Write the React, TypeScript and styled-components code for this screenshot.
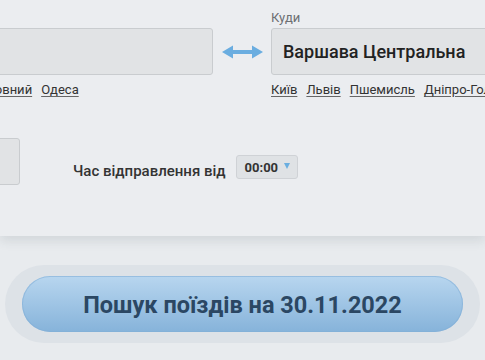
import React from "react";
import styled, { createGlobalStyle } from "styled-components";

const GlobalStyle = createGlobalStyle`
  html, body {
    margin: 0;
    padding: 0;
    background: #e8ebee;
    overflow: hidden;
  }
  body {
    font-family: Roboto, "Liberation Sans", Arial, sans-serif;
    color: #333;
  }
`;

const Page = styled.div`
  width: 485px;
  height: 360px;
  overflow: hidden;
`;

const Panel = styled.div`
  background: #ebedf0;
  height: 236px;
  box-shadow: 0 5px 10px rgba(60, 70, 80, 0.12);
  position: relative;
  padding-top: 10px;
  box-sizing: border-box;
`;

// the form is wider than the window: its left part is scrolled out of view
const Inner = styled.div`
  margin-left: -151px;
  width: 900px;
  display: flex;
  flex-direction: column;
  gap: 41px;
`;

const StationRow = styled.div`
  display: grid;
  grid-template-columns: 364px 58px 343px;
  align-items: start;
`;

const Field = styled.div`
  display: flex;
  flex-direction: column;
`;

const Label = styled.div`
  height: 18px;
  font-size: 13px;
  color: #6c6f73;
  line-height: 15px;
`;

const StationInput = styled.div`
  height: 47px;
  box-sizing: border-box;
  background: #e1e3e5;
  border: 1px solid #c9cccf;
  border-radius: 3px;
  padding: 0 11px;
  display: flex;
  align-items: center;
  font-size: 18px;
  font-weight: 500;
  color: #222;
`;

const Links = styled.div`
  display: flex;
  gap: 9px;
  margin-top: 7px;
  white-space: nowrap;
`;

const Link = styled.a`
  font-size: 13px;
  color: #333;
  text-decoration: underline;
  text-underline-offset: 2px;
  text-decoration-color: #666;
`;

const SwapBox = styled.div`
  height: 47px;
  margin-top: 18px;
  display: flex;
  align-items: center;
  justify-content: center;
`;

const TimeRow = styled.div`
  display: flex;
  align-items: flex-start;
`;

const DateInput = styled.div`
  width: 171px;
  height: 47px;
  box-sizing: border-box;
  background: #e1e3e5;
  border: 1px solid #c9cccf;
  border-radius: 3px;
`;

const TimeLabel = styled.span`
  margin-left: 53px;
  margin-top: 24px;
  line-height: 18px;
  font-size: 15px;
  font-weight: 500;
  color: #333;
`;

const Select = styled.div`
  margin-left: 10px;
  margin-top: 17px;
  width: 62px;
  height: 24px;
  box-sizing: border-box;
  background: #dfe2e5;
  border: 1px solid #cfd2d6;
  border-radius: 3px;
  display: flex;
  align-items: center;
  padding-left: 8px;
  gap: 6px;
  font-size: 13px;
  font-weight: 700;
  color: #333;
`;

const Caret = styled.span`
  width: 0;
  height: 0;
  border-left: 3.5px solid transparent;
  border-right: 3.5px solid transparent;
  border-top: 6px solid #6aaee0;
  margin-top: -3px;
`;

const ButtonArea = styled.div`
  padding: 29px 5px 0;
`;

const ButtonTrack = styled.div`
  height: 78px;
  border-radius: 39px;
  background: #dde2e7;
  padding: 11px 17px;
  box-sizing: border-box;
`;

const SearchButton = styled.button`
  width: 100%;
  height: 56px;
  padding: 2px 0 0;
  border: none;
  border-radius: 28px;
  background: linear-gradient(#b8d6ef, #86b3da);
  box-shadow: inset 0 0 0 1px rgba(130, 175, 215, 0.6);
  font-family: Roboto, "Liberation Sans", Arial, sans-serif;
  font-size: 23.5px;
  font-weight: 700;
  color: #2b4763;
  cursor: pointer;
`;

const SwapIcon = () => (
  <svg width="41" height="16" viewBox="0 0 41 16">
    <rect x="9" y="6" width="23" height="4" fill="#6aade0" />
    <polygon points="0,8 11,1.5 11,14.5" fill="#6aade0" />
    <polygon points="41,8 30,1.5 30,14.5" fill="#6aade0" />
  </svg>
);

const App = () => {
  const fromLinks = ["Київ", "Львів", "Дніпро-Головний", "Одеса"];
  const toLinks = ["Київ", "Львів", "Пшемисль", "Дніпро-Головний"];
  return (
    <Page>
      <GlobalStyle />
      <Panel>
        <Inner>
          <StationRow>
            <Field>
              <Label>Звідки</Label>
              <StationInput />
              <Links>
                {fromLinks.map(l => (
                  <Link key={l}>{l}</Link>
                ))}
              </Links>
            </Field>
            <SwapBox>
              <SwapIcon />
            </SwapBox>
            <Field>
              <Label>Куди</Label>
              <StationInput>Варшава Центральна</StationInput>
              <Links>
                {toLinks.map(l => (
                  <Link key={l}>{l}</Link>
                ))}
              </Links>
            </Field>
          </StationRow>
          <TimeRow>
            <DateInput />
            <TimeLabel>Час відправлення від</TimeLabel>
            <Select>
              00:00
              <Caret />
            </Select>
          </TimeRow>
        </Inner>
      </Panel>
      <ButtonArea>
        <ButtonTrack>
          <SearchButton>Пошук поїздів на 30.11.2022</SearchButton>
        </ButtonTrack>
      </ButtonArea>
    </Page>
  );
};

export default App;
